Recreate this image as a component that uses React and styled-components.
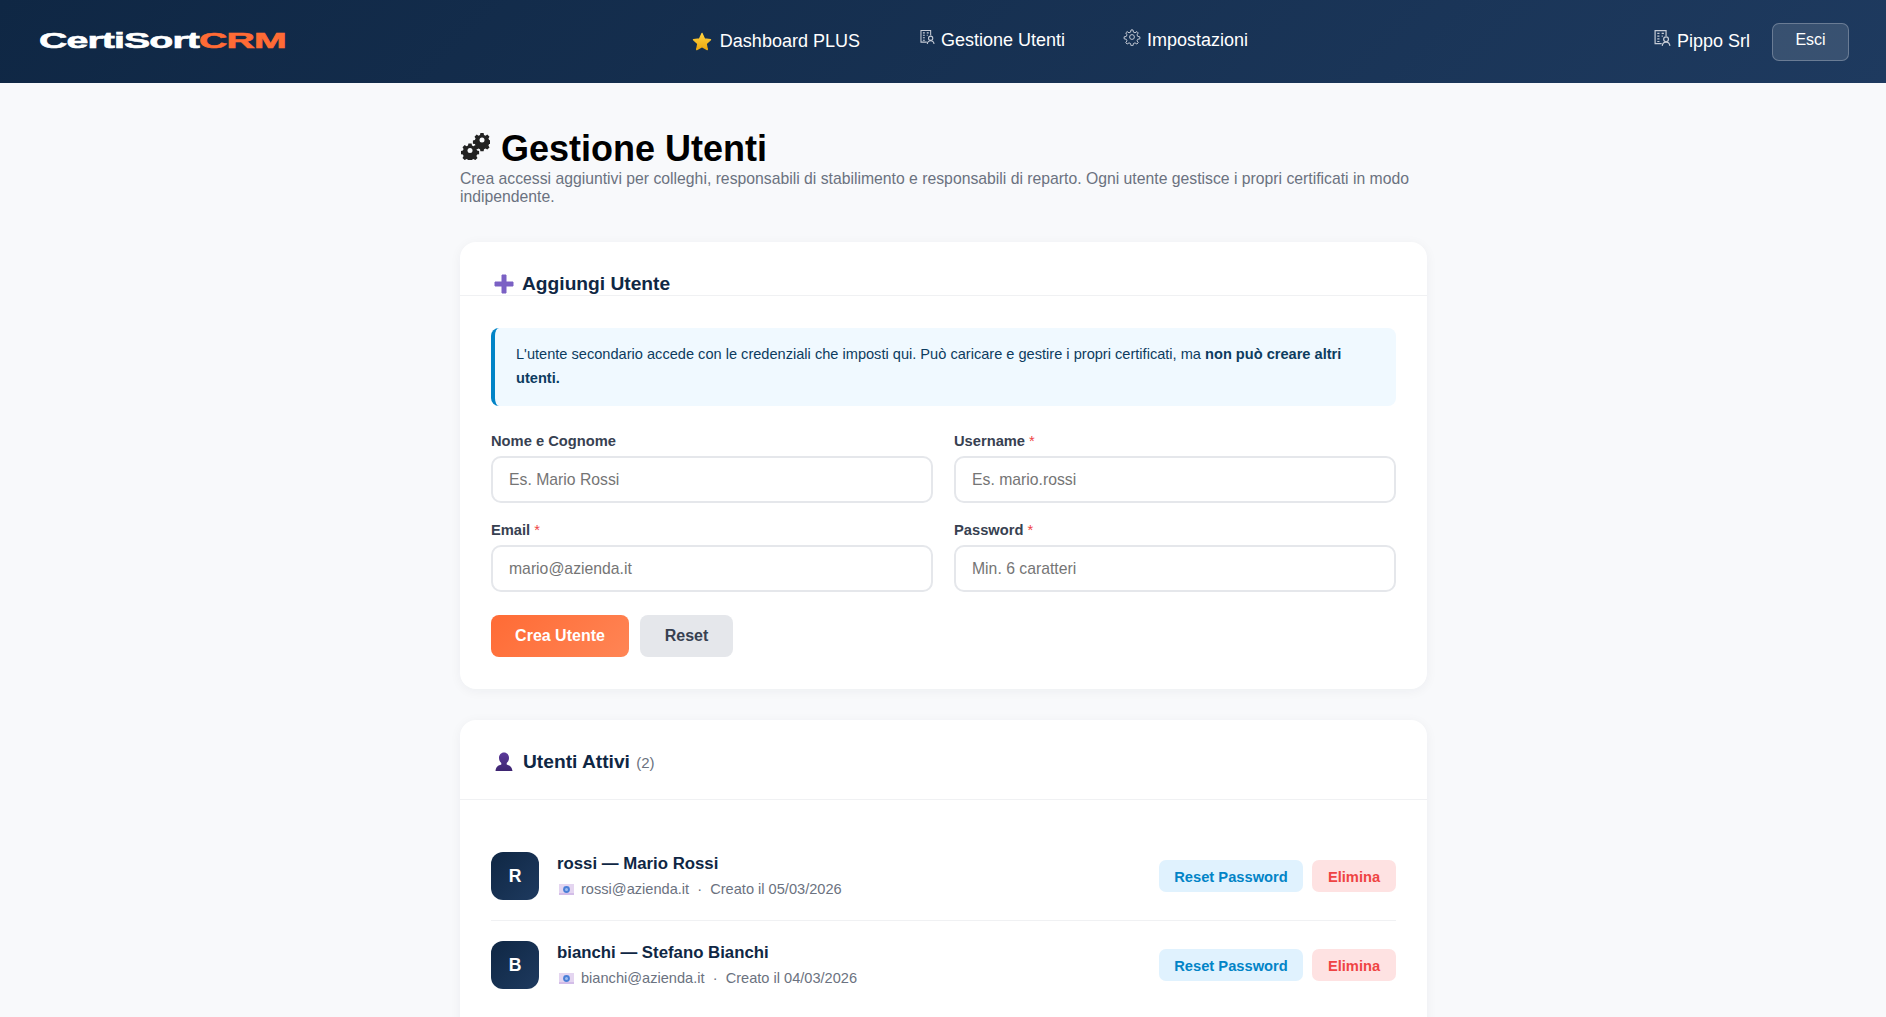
import React from 'react';
import styled, { createGlobalStyle } from 'styled-components';

const GlobalStyle = createGlobalStyle`
  * { box-sizing: border-box; }
  html, body { margin: 0; padding: 0; }
  body {
    background: #f8f9fb;
    font-family: "Liberation Sans", Arial, sans-serif;
    color: #0f2744;
  }
  input::placeholder { color: #757575; opacity: 1; }
`;

const Header = styled.header`
  height: 83px;
  background: linear-gradient(135deg, #0f2744 0%, #1e3a5f 100%);
  display: flex;
  justify-content: space-between;
  align-items: center;
  padding: 0 37px 0 39px;
  color: #fff;
`;

const Logo = styled.div`
  font-size: 22px;
  font-weight: 700;
  letter-spacing: -0.5px;
  white-space: nowrap;
  width: 246px;
  padding-bottom: 2px;
  transform: scaleX(1.785);
  transform-origin: left center;
  -webkit-text-stroke: 0.6px currentColor;
  span { color: #ff6b35; }
`;

const Nav = styled.nav`
  display: flex;
  align-items: center;
  gap: 60px;
  margin-left: 1px;
`;

const NavItem = styled.a`
  display: flex;
  align-items: center;
  gap: ${p => p.$gap || 6}px;
  font-size: 18px;
  color: #fff;
  white-space: nowrap;
  padding-bottom: ${p => (p.$lift ? '2px' : '0')};
  margin-left: ${p => p.$pull || 0}px;
`;

const HeaderRight = styled.div`
  display: flex;
  justify-content: flex-end;
  align-items: center;
  gap: 22px;
`;

const LogoutButton = styled.button`
  width: 77px;
  height: 38px;
  background: rgba(255, 255, 255, 0.12);
  border: 1px solid rgba(255, 255, 255, 0.25);
  border-radius: 7px;
  color: #fff;
  font: 16px "Liberation Sans", Arial, sans-serif;
  padding: 0 0 3px;
`;

const Main = styled.main`
  width: 967px;
  margin-left: 460px;
  padding-top: 45px;
`;

const PageTitle = styled.h1`
  margin: 0;
  display: flex;
  align-items: center;
  gap: 11px;
  font-size: 36px;
  line-height: 42px;
  font-weight: 700;
  color: #000;
`;

const Subtitle = styled.p`
  margin: 0 0 36px;
  font-size: 15.75px;
  line-height: 18px;
  color: #6b7280;
`;

const Card = styled.section`
  background: #fff;
  border-radius: 16px;
  box-shadow: 0 2px 12px rgba(15, 39, 68, 0.05);
  margin-bottom: 31px;
`;

const CardHeader = styled.div`
  display: flex;
  align-items: ${p => (p.$tall ? 'center' : 'flex-end')};
  gap: 8px;
  height: ${p => (p.$tall ? '80px' : '54px')};
  padding: ${p => (p.$tall ? '4px' : '0')} 31px ${p => (p.$tall ? '0' : '1px')} 34px;
  border-bottom: 1px solid #f0f1f3;
`;

const CardTitle = styled.h2`
  margin: 0;
  font-size: 19.2px;
  line-height: 21px;
  font-weight: 700;
  color: #0f2744;
  small {
    font-size: 15px;
    font-weight: 400;
    color: #6b7280;
    margin-left: 1px;
  }
`;

const CardBody = styled.div`
  padding: 32px 31px;
`;

const InfoBox = styled.div`
  background: #f0f9ff;
  border-left: 4px solid #0284c7;
  border-radius: 8px;
  padding: 14px 21px 16px;
  font-size: 14.6px;
  line-height: 24px;
  color: #0c3c60;
  margin-bottom: 27px;
`;

const FormGrid = styled.div`
  display: grid;
  grid-template-columns: 1fr 1fr;
  column-gap: 21px;
  row-gap: 19px;
`;

const Field = styled.label`
  display: block;
`;

const LabelText = styled.span`
  display: block;
  font-size: 14.7px;
  line-height: 17px;
  font-weight: 700;
  color: #374151;
  margin-bottom: 6px;
  i { color: #ef4444; font-style: normal; font-weight: 400; }
`;

const Input = styled.input`
  display: block;
  width: 100%;
  height: 47px;
  border: 2px solid #e5e7eb;
  border-radius: 10px;
  padding: 0 16px;
  font: 15.75px "Liberation Sans", Arial, sans-serif;
  background: #fff;
  outline: none;
`;

const ButtonRow = styled.div`
  display: flex;
  gap: 11px;
  margin-top: 23px;
`;

const Button = styled.button`
  height: 42px;
  width: ${p => (p.$primary ? '138px' : '93px')};
  border: none;
  border-radius: 8px;
  background: ${p => (p.$primary ? 'linear-gradient(135deg, #ff6b35, #ff8555)' : '#e5e7eb')};
  color: ${p => (p.$primary ? '#fff' : '#374151')};
  font: 700 16px "Liberation Sans", Arial, sans-serif;
`;

const UserList = styled.div`
  padding: 32px 31px;
`;

const UserRow = styled.div`
  display: flex;
  align-items: center;
  gap: 18px;
  padding: 20px 0;
  border-bottom: 1px solid ${p => (p.$last ? 'transparent' : '#f0f1f3')};
`;

const Avatar = styled.div`
  width: 48px;
  height: 48px;
  flex: none;
  border-radius: 12px;
  background: linear-gradient(135deg, #0f2744, #1e3a5f);
  color: #fff;
  display: flex;
  align-items: center;
  justify-content: center;
  font-size: 17.6px;
  font-weight: 700;
`;

const UserInfo = styled.div`
  flex: 1;
  min-width: 0;
`;

const UserName = styled.div`
  font-size: 16.8px;
  line-height: 20px;
  font-weight: 700;
  color: #0f2744;
  margin-bottom: 6px;
`;

const UserMeta = styled.div`
  display: flex;
  align-items: center;
  font-size: 14.6px;
  line-height: 18px;
  color: #6b7280;
  white-space: pre;
`;

const Actions = styled.div`
  display: flex;
  gap: 9px;
`;

const ActionButton = styled.button`
  height: 32px;
  padding: 1px 0 0;
  width: ${p => (p.$danger ? '84px' : '144px')};
  border: none;
  border-radius: 7px;
  background: ${p => (p.$danger ? '#fee2e2' : '#e0f2fe')};
  color: ${p => (p.$danger ? '#ef4444' : '#0284c7')};
  font: 700 14.7px "Liberation Sans", Arial, sans-serif;
`;

const LineIcon = styled.svg`
  flex: none;
  margin-top: -7px;
  fill: none;
  stroke: #c6ccd6;
`;

const StarIcon = () => (
  <svg width="20" height="20" viewBox="0 0 20 20">
    <defs>
      <linearGradient id="starFill" x1="0" y1="0" x2="0" y2="1">
        <stop offset="0" stopColor="#ffd23f" />
        <stop offset="1" stopColor="#eda80f" />
      </linearGradient>
    </defs>
    <path
      d="M10 1.5 12.5 7l6 .7-4.4 4 1.2 5.9L10 14.7l-5.3 2.9 1.2-5.9-4.4-4 6-.7z"
      fill="url(#starFill)"
      stroke="url(#starFill)"
      strokeWidth="1.4"
      strokeLinejoin="round"
    />
  </svg>
);

const OfficeIcon = ({ size = 15 }) => (
  <LineIcon width={size} height={size} viewBox="1 1 15.5 15.5" strokeWidth="1.1">
    <path d="M8 13.5H2V1.5h10v5" />
    <path d="M4 4h2M8 4h2M4 6.5h2M8 6.5h1M4 9h2M4 11.5h2" />
    <circle cx="12" cy="9.5" r="2.2" />
    <path d="M8.5 15.5c.3-2.400 1.600-3.400 3.500-3.400s3.200 1 3.500 3.400" />
  </LineIcon>
);

const GearOutlineIcon = () => (
  <LineIcon width="18" height="18" viewBox="0 0 24 24" strokeWidth="1.3">
    <circle cx="12" cy="12" r="3.2" />
    <path d="M12 2.5l1.300.1.600 2.900 2.100.9 2.500-1.600 1.800 1.800-1.600 2.500.9 2.100 2.900.6v2.600l-2.900.6-.9 2.100 1.600 2.500-1.800 1.800-2.500-1.600-2.100.9-.6 2.900h-2.600l-.6-2.900-2.100-.9-2.500 1.600-1.800-1.800 1.600-2.500-.9-2.100-2.900-.6v-2.600l2.900-.6.9-2.100-1.600-2.500 1.800-1.800 2.500 1.600 2.100-.9.6-2.900z" />
  </LineIcon>
);

const gearPath = 'M-1.6-7h3.2l.4 2 1.5.7 1.800-1.100 2.200 2.200-1.100 1.800.7 1.500 2 .4v3.200l-2 .4-.7 1.500 1.100 1.800-2.200 2.200-1.800-1.100-1.500.7-.4 2h-3.200l-.4-2-1.500-.7-1.800 1.100-2.200-2.200 1.100-1.800-.7-1.500-2-.4v-3.200l2-.4.7-1.500-1.100-1.800 2.200-2.200 1.800 1.100 1.500-.7z';

const GearsIcon = () => (
  <svg width="29" height="29" viewBox="0 0 29 29" style={{ marginTop: -7, marginLeft: 1 }}>
    <g fill="#222">
      <g transform="translate(9 19.5)">
        <path d={gearPath} />
        <circle r="2.5" fill="#f8f9fb" />
      </g>
      <g transform="translate(21 9)">
        <path d={gearPath} />
        <circle r="2.5" fill="#f8f9fb" />
      </g>
    </g>
  </svg>
);

const PlusIcon = () => (
  <svg width="20" height="20" viewBox="0 0 20 20">
    <path d="M8 1h4v7h7v4h-7v7H8v-7H1V8h7z" fill="#7b61c4" stroke="#7b61c4" strokeLinejoin="round" />
  </svg>
);

const BustIcon = () => (
  <svg width="21" height="20" viewBox="0 0 21 20">
    <defs>
      <linearGradient id="bustFill" x1="0" y1="0" x2="0" y2="1">
        <stop offset="0" stopColor="#5b3a9a" />
        <stop offset="1" stopColor="#3d2470" />
      </linearGradient>
    </defs>
    <path
      d="M10 .5c3 0 5 2.400 5 5.500 0 2.200-1 4-2.300 5v1.500c3.200 1 5.300 2.200 5.800 6.500H1.500c.5-4.300 2.600-5.500 5.800-6.500V11C6 10 5 8.200 5 6c0-3.100 2-5.500 5-5.500z"
      fill="url(#bustFill)"
    />
  </svg>
);

const MailIcon = () => (
  <svg width="15" height="11" viewBox="0 0 15 11" style={{ marginRight: 7, marginLeft: 2 }}>
    <rect width="15" height="11" fill="#e4d5f0" />
    <rect y="9" width="15" height="2" fill="#d3bde8" />
    <circle cx="7.5" cy="5.5" r="3.4" fill="#4a7fd6" />
    <circle cx="7.5" cy="5.5" r="1.5" fill="#9dbcf0" />
  </svg>
);

const users = [
  { initial: 'R', name: 'rossi — Mario Rossi', email: 'rossi@azienda.it', created: '05/03/2026' },
  { initial: 'B', name: 'bianchi — Stefano Bianchi', email: 'bianchi@azienda.it', created: '04/03/2026' },
];

export default function App() {
  return (
    <>
      <GlobalStyle />
      <Header>
        <Logo>CertiSort<span>CRM</span></Logo>
        <Nav>
          <NavItem $gap={8}><StarIcon />Dashboard PLUS</NavItem>
          <NavItem $lift><OfficeIcon />Gestione Utenti</NavItem>
          <NavItem $lift $pull={-2}><GearOutlineIcon />Impostazioni</NavItem>
        </Nav>
        <HeaderRight>
          <NavItem><OfficeIcon size={17} />Pippo Srl</NavItem>
          <LogoutButton>Esci</LogoutButton>
        </HeaderRight>
      </Header>
      <Main>
        <PageTitle><GearsIcon />Gestione Utenti</PageTitle>
        <Subtitle>
          Crea accessi aggiuntivi per colleghi, responsabili di stabilimento e responsabili di reparto. Ogni utente gestisce i propri certificati in modo indipendente.
        </Subtitle>
        <Card>
          <CardHeader>
            <PlusIcon />
            <CardTitle>Aggiungi Utente</CardTitle>
          </CardHeader>
          <CardBody>
            <InfoBox>
              L'utente secondario accede con le credenziali che imposti qui. Può caricare e gestire i propri certificati, ma <strong>non può creare altri utenti.</strong>
            </InfoBox>
            <FormGrid>
              <Field>
                <LabelText>Nome e Cognome</LabelText>
                <Input placeholder="Es. Mario Rossi" />
              </Field>
              <Field>
                <LabelText>Username <i>*</i></LabelText>
                <Input placeholder="Es. mario.rossi" />
              </Field>
              <Field>
                <LabelText>Email <i>*</i></LabelText>
                <Input placeholder="mario@azienda.it" />
              </Field>
              <Field>
                <LabelText>Password <i>*</i></LabelText>
                <Input placeholder="Min. 6 caratteri" />
              </Field>
            </FormGrid>
            <ButtonRow>
              <Button $primary>Crea Utente</Button>
              <Button>Reset</Button>
            </ButtonRow>
          </CardBody>
        </Card>
        <Card>
          <CardHeader $tall>
            <BustIcon />
            <CardTitle>Utenti Attivi <small>(2)</small></CardTitle>
          </CardHeader>
          <UserList>
            {users.map((u, i) => (
              <UserRow key={u.initial} $last={i === users.length - 1}>
                <Avatar>{u.initial}</Avatar>
                <UserInfo>
                  <UserName>{u.name}</UserName>
                  <UserMeta><MailIcon />{u.email}{'  ·  '}Creato il {u.created}</UserMeta>
                </UserInfo>
                <Actions>
                  <ActionButton>Reset Password</ActionButton>
                  <ActionButton $danger>Elimina</ActionButton>
                </Actions>
              </UserRow>
            ))}
          </UserList>
        </Card>
      </Main>
    </>
  );
}
